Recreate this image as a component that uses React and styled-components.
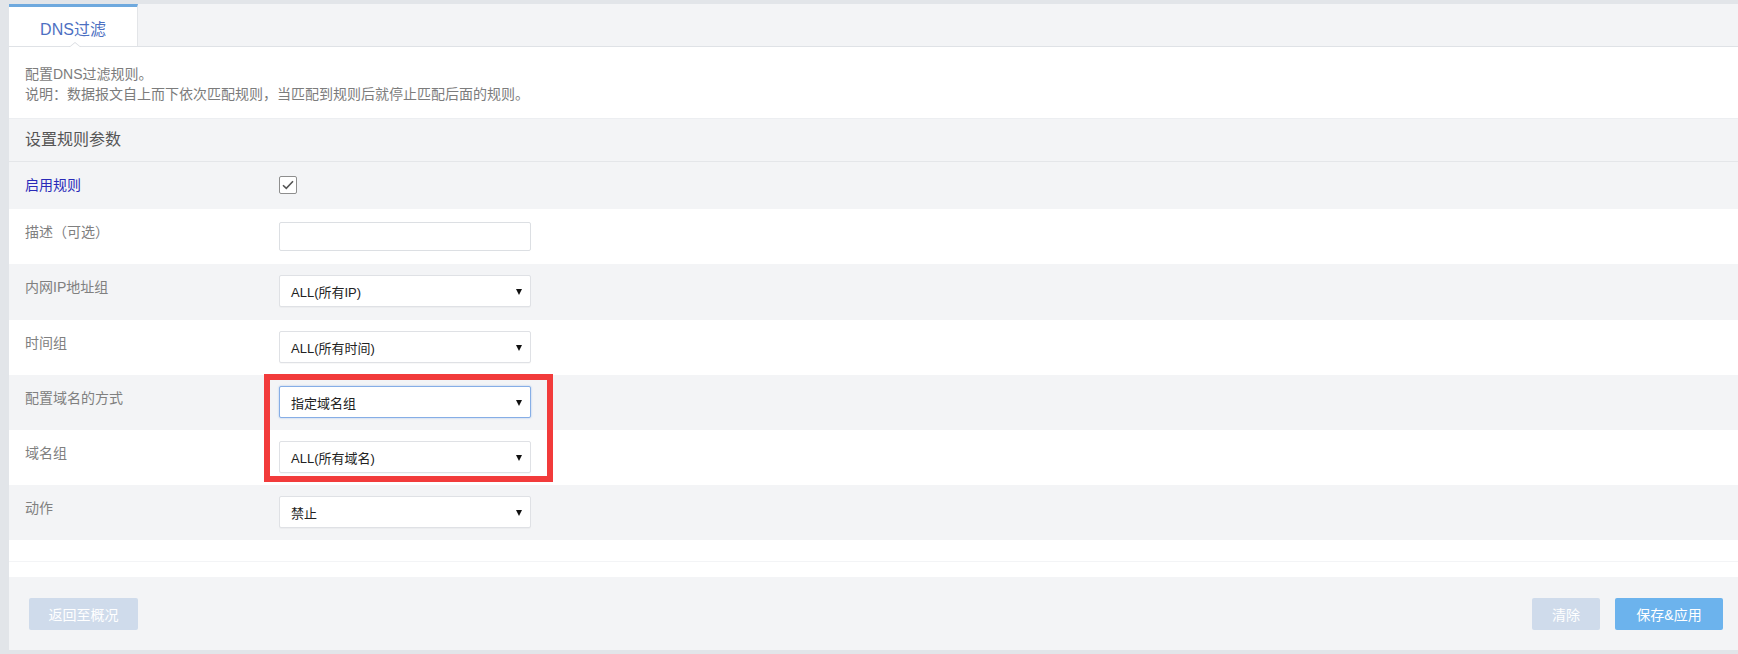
import React from 'react'
import styled, { createGlobalStyle } from 'styled-components'

const GlobalStyle = createGlobalStyle`
  html, body {
    margin: 0;
    padding: 0;
    background: #e2e5e9;
  }
  body {
    font-family: "Liberation Sans", "Noto Sans CJK SC", sans-serif;
  }
`

const rows = [
    { label: '描述（可选）', type: 'input', height: 55 },
    { label: '内网IP地址组', type: 'select', value: 'ALL(所有IP)', height: 56, shaded: true },
    { label: '时间组', type: 'select', value: 'ALL(所有时间)', height: 55 },
]

const marked = [
    { label: '配置域名的方式', type: 'select', value: '指定域名组', height: 55, shaded: true, focused: true },
    { label: '域名组', type: 'select', value: 'ALL(所有域名)', height: 55 },
]

function Control({ row }) {
    if (row.type === 'input') return <TextInput />
    return (
        <SelectBox focused={row.focused}>
            <span>{row.value}</span>
            <Arrow />
        </SelectBox>
    )
}

function FormRow({ row }) {
    return (
        <Row height={row.height} shaded={row.shaded}>
            <Label>{row.label}</Label>
            <ControlCell>
                <Control row={row} />
            </ControlCell>
        </Row>
    )
}

export default function App() {
    return (
        <>
        <GlobalStyle />
        <Page>
            <Panel>
                <TabBar>
                    <Tab>DNS过滤</Tab>
                </TabBar>

                <Intro>
                    <div>配置DNS过滤规则。</div>
                    <div>说明：数据报文自上而下依次匹配规则，当匹配到规则后就停止匹配后面的规则。</div>
                </Intro>

                <SectionTitle>设置规则参数</SectionTitle>

                <Row height={47} shaded>
                    <Label active>启用规则</Label>
                    <ControlCell>
                        <CheckBox>
                            <svg width="12" height="10" viewBox="0 0 12 10">
                                <path d="M1 5.2 L4.3 8.4 L11 1.2" fill="none" stroke="#555" strokeWidth="1.6" />
                            </svg>
                        </CheckBox>
                    </ControlCell>
                </Row>

                {rows.map(r => <FormRow key={r.label} row={r} />)}

                <Highlight>
                    {marked.map(r => <FormRow key={r.label} row={r} />)}
                    <RedFrame />
                </Highlight>

                <FormRow row={{ label: '动作', type: 'select', value: '禁止', height: 55, shaded: true }} />

                <Spacer />

                <Footer>
                    <Button tone="pale" width={109}>返回至概况</Button>
                    <ButtonGroup>
                        <Button tone="pale" width={68}>清除</Button>
                        <Button tone="blue" width={108}>保存&amp;应用</Button>
                    </ButtonGroup>
                </Footer>
            </Panel>
        </Page>
        </>
    )
}

const Page = styled.div`
    width: 1738px;
    height: 654px;
    box-sizing: border-box;
    padding: 4px 0 4px 9px;
    background: #e2e5e9;
`

const Panel = styled.div`
    height: 100%;
    display: flex;
    flex-direction: column;
    background: #fff;
`

const TabBar = styled.div`
    height: 42px;
    display: flex;
    background: #f3f4f6;
    border-bottom: 1px solid #dfe2e6;
`

const Tab = styled.div`
    position: relative;
    width: 129px;
    box-sizing: border-box;
    display: flex;
    align-items: center;
    justify-content: center;
    padding-top: 2px;
    background: #fff;
    border-top: 3px solid #6ea9de;
    border-right: 1px solid #e3e5e8;
    color: #4d70c2;
    font-size: 16px;

    &::before {
        content: '';
        position: absolute;
        left: 60px;
        bottom: -1px;
        border-left: 6px solid transparent;
        border-right: 6px solid transparent;
        border-bottom: 5px solid #d8dbe0;
    }
    &::after {
        content: '';
        position: absolute;
        left: 61px;
        bottom: -1px;
        border-left: 5px solid transparent;
        border-right: 5px solid transparent;
        border-bottom: 4px solid #fff;
    }
`

const Intro = styled.div`
    padding: 17px 16px 14px;
    border-bottom: 1px solid #eceef1;
    color: #7c7c7c;
    font-size: 14px;
    line-height: 20px;
`

const SectionTitle = styled.div`
    height: 42px;
    line-height: 42px;
    padding-left: 16px;
    background: #f3f4f6;
    border-bottom: 1px solid #e4e6e9;
    color: #555;
    font-size: 16px;
`

const Row = styled.div`
    display: flex;
    align-items: flex-start;
    height: ${p => p.height}px;
    background: ${p => (p.shaded ? '#f3f4f6' : '#fff')};
`

const Label = styled.div`
    width: 270px;
    box-sizing: border-box;
    padding: 13px 0 0 16px;
    font-size: 14px;
    line-height: 20px;
    color: ${p => (p.active ? '#2a2ab8' : '#808080')};
`

const ControlCell = styled.div`
    padding-top: 11px;
`

const CheckBox = styled.div`
    width: 18px;
    height: 18px;
    box-sizing: border-box;
    margin-top: 3px;
    display: flex;
    align-items: center;
    justify-content: center;
    background: #fff;
    border: 1px solid #8e8e8e;
    border-radius: 2px;
`

const TextInput = styled.div`
    width: 252px;
    height: 29px;
    box-sizing: border-box;
    margin-top: 2px;
    background: #fff;
    border: 1px solid #dcdfe3;
    border-radius: 2px;
`

const SelectBox = styled.div`
    width: 252px;
    height: 32px;
    box-sizing: border-box;
    display: flex;
    align-items: center;
    justify-content: space-between;
    padding: 0 8px 0 11px;
    background: #fff;
    border: 1px solid ${p => (p.focused ? '#86aee6' : '#dfe1e5')};
    border-radius: 2px;
    box-shadow: ${p => (p.focused ? '0 0 2px rgba(110, 160, 230, 0.6)' : '0 1px 1px rgba(0, 0, 0, 0.03)')};
    color: #222;
    font-size: 13px;
`

const Arrow = styled.span`
    width: 0;
    height: 0;
    margin-top: 2px;
    border-left: 3px solid transparent;
    border-right: 3px solid transparent;
    border-top: 6px solid #111;
`

const Highlight = styled.div`
    position: relative;
`

const RedFrame = styled.div`
    position: absolute;
    left: 255px;
    top: -1px;
    width: 289px;
    height: 108px;
    box-sizing: border-box;
    border: 6px solid #f23b3b;
    pointer-events: none;
`

const Spacer = styled.div`
    height: 37px;
    box-sizing: border-box;
    background: linear-gradient(#fff 0 21px, #f3f4f6 21px 22px, #fff 22px);
`

const Footer = styled.div`
    flex: 1;
    display: flex;
    align-items: flex-start;
    justify-content: space-between;
    padding: 21px 15px 0 20px;
    background: #f3f4f6;
`

const ButtonGroup = styled.div`
    display: flex;
    gap: 15px;
`

const Button = styled.div`
    width: ${p => p.width}px;
    height: 32px;
    display: flex;
    align-items: center;
    justify-content: center;
    border-radius: 2px;
    background: ${p => (p.tone === 'blue' ? '#6cb3ed' : '#cfdbeb')};
    color: #fff;
    font-size: 14px;
`
